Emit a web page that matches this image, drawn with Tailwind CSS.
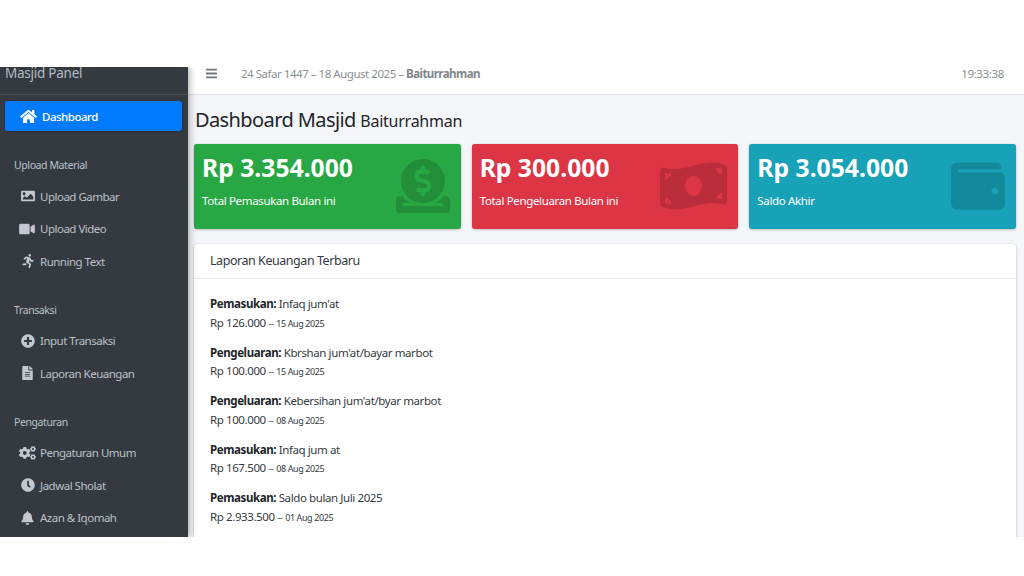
<!DOCTYPE html>
<html><head><meta charset="utf-8"><script src="https://cdn.jsdelivr.net/npm/@tailwindcss/browser@4"></script></head>
<body class="bg-white">
<div class="w-[1024px] h-[576px] flex flex-col overflow-hidden bg-white font-['Noto_Sans',sans-serif]">
  <div class="h-[67px] shrink-0"></div>
  <div class="h-[470px] flex overflow-hidden bg-[#f4f6f9]">
    <aside class="w-[188px] shrink-0 bg-[#343a40] text-[#bcc1c9] relative z-10 shadow-[2px_0_7px_rgba(0,0,0,0.3)] overflow-hidden text-[11.5px] tracking-[-0.5px]">
      <div class="h-[28px] border-b border-[#4b545c] pl-[5px] text-[13.5px] tracking-[-0.25px] leading-[13px] text-[#b5bac1]">Masjid Panel</div>
      <div class="pl-[5px] pr-[6px] pt-[6px]">
        <div class="h-[30px] rounded-[3px] bg-[#007bff] text-white flex items-center pl-[15px] pt-[2px] font-medium shadow-sm">
          <svg class="w-[17px] h-[15px] mr-[5px] mb-[2px] fill-white" viewBox="0 0 576 512"><path d="M280.37 148.26L96 300.11V464a16 16 0 0 0 16 16l112.06-.29a16 16 0 0 0 15.92-16V368a16 16 0 0 1 16-16h64a16 16 0 0 1 16 16v95.64a16 16 0 0 0 16 16.05L464 480a16 16 0 0 0 16-16V300L295.67 148.26a12.19 12.19 0 0 0-15.3 0zM571.6 251.47L488 182.56V44.05a12 12 0 0 0-12-12h-56a12 12 0 0 0-12 12v72.61L318.47 43a48 48 0 0 0-61 0L4.34 251.47a12 12 0 0 0-1.6 16.9l25.5 31A12 12 0 0 0 45.15 301l235.22-193.74a12.19 12.19 0 0 1 15.3 0L530.9 301a12 12 0 0 0 16.9-1.6l25.5-31a12 12 0 0 0-1.7-16.93z"/></svg>
          Dashboard
        </div>
        <div class="mt-[26px] pl-[9px] h-[16px] leading-[16px] text-[10.5px] tracking-[-0.4px]">Upload Material</div>
        <div class="mt-[7px] flex flex-col">
          <div class="h-[32.5px] flex items-center pl-[15px]"><span class="w-[15px] mr-[5px] flex justify-center"><svg class="h-[14px] w-[14px] fill-[#c2c7d0]" viewBox="0 0 512 512"><path d="M464 448H48c-26.51 0-48-21.49-48-48V112c0-26.51 21.49-48 48-48h416c26.51 0 48 21.49 48 48v288c0 26.51-21.49 48-48 48zM112 120c-30.928 0-56 25.072-56 56s25.072 56 56 56 56-25.072 56-56-25.072-56-56-56zM64 384h384V272l-87.515-87.515c-4.686-4.686-12.284-4.686-16.971 0L208 320l-55.515-55.515c-4.686-4.686-12.284-4.686-16.971 0L64 336v48z"/></svg></span>Upload Gambar</div>
          <div class="h-[32.5px] flex items-center pl-[14px]"><span class="w-[16px] mr-[5px] flex justify-center"><svg class="h-[14px] w-[16px] fill-[#c2c7d0]" viewBox="0 0 576 512"><path d="M336.2 64H47.8C21.4 64 0 85.4 0 111.8v288.4C0 426.6 21.4 448 47.8 448h288.4c26.4 0 47.8-21.4 47.8-47.8V111.8c0-26.4-21.4-47.8-47.8-47.8zm189.4 37.7L416 177.3v157.4l109.6 75.5c21.2 14.6 50.4-.3 50.4-25.8V127.5c0-25.4-29.1-40.4-50.4-25.8z"/></svg></span>Upload Video</div>
          <div class="h-[32.5px] flex items-center pl-[15px]"><span class="w-[15px] mr-[5px] flex justify-center"><svg class="h-[14px] w-[12px] fill-[#c2c7d0]" viewBox="0 0 416 512"><path d="M272 96c26.51 0 48-21.49 48-48S298.51 0 272 0s-48 21.49-48 48 21.49 48 48 48zM113.69 317.47l-14.8 34.52H32c-17.67 0-32 14.33-32 32s14.33 32 32 32h77.45c19.25 0 36.58-11.44 44.11-29.09l8.79-20.52-10.67-6.3c-17.32-10.23-30.06-25.37-37.99-42.61zM384 223.99h-44.03l-26.06-53.25c-12.5-25.55-35.45-44.23-61.78-50.94l-71.08-21.14c-28.3-6.8-57.77-.55-80.84 17.14l-39.67 30.41c-14.03 10.75-16.69 30.83-5.92 44.86s30.84 16.66 44.86 5.92l39.69-30.41c7.67-5.89 17.44-8 25.27-6.14l14.7 4.37-37.46 87.39c-12.62 29.48-1.31 64.01 26.3 80.31l84.98 50.17-27.47 87.73c-5.28 16.86 4.11 34.81 20.97 40.09 3.19 1 6.41 1.48 9.58 1.48 13.61 0 26.23-8.77 30.52-22.45l31.64-101.06c5.91-20.77-2.89-43.08-21.64-54.39l-61.24-36.14 31.31-78.28 20.27 41.43c8 16.34 24.92 26.89 43.11 26.89H384c17.67 0 32-14.33 32-32s-14.33-31.99-32-31.99z"/></svg></span>Running Text</div>
        </div>
        <div class="mt-[24px] pl-[9px] h-[16px] leading-[16px] text-[10.5px] tracking-[-0.4px]">Transaksi</div>
        <div class="mt-[7px] flex flex-col">
          <div class="h-[32.5px] flex items-center pl-[15px]"><span class="w-[15px] mr-[5px] flex justify-center"><svg class="h-[14px] w-[14px] fill-[#c2c7d0]" viewBox="0 0 512 512"><path d="M256 8C119 8 8 119 8 256s111 248 248 248 248-111 248-248S393 8 256 8zm144 276c0 6.6-5.4 12-12 12h-92v92c0 6.6-5.4 12-12 12h-56c-6.6 0-12-5.4-12-12v-92h-92c-6.6 0-12-5.4-12-12v-56c0-6.6 5.4-12 12-12h92v-92c0-6.6 5.4-12 12-12h56c6.6 0 12 5.4 12 12v92h92c6.6 0 12 5.4 12 12v56z"/></svg></span>Input Transaksi</div>
          <div class="h-[32.5px] flex items-center pl-[15px]"><span class="w-[15px] mr-[5px] flex justify-center"><svg class="h-[14px] w-[11px] fill-[#c2c7d0]" viewBox="0 0 384 512"><path d="M224 136V0H24C10.7 0 0 10.7 0 24v464c0 13.3 10.7 24 24 24h336c13.3 0 24-10.7 24-24V160H248c-13.2 0-24-10.8-24-24zm64 236c0 6.6-5.4 12-12 12H108c-6.6 0-12-5.4-12-12v-8c0-6.6 5.4-12 12-12h168c6.6 0 12 5.4 12 12v8zm0-64c0 6.6-5.4 12-12 12H108c-6.6 0-12-5.4-12-12v-8c0-6.6 5.4-12 12-12h168c6.6 0 12 5.4 12 12v8zm0-72v8c0 6.6-5.4 12-12 12H108c-6.6 0-12-5.4-12-12v-8c0-6.6 5.4-12 12-12h168c6.6 0 12 5.4 12 12zm96-114.1v6.1H256V0h6.1c6.4 0 12.5 2.5 17 7l97.9 98c4.5 4.5 7 10.6 7 16.9z"/></svg></span>Laporan Keuangan</div>
        </div>
        <div class="mt-[24px] pl-[9px] h-[16px] leading-[16px] text-[10.5px] tracking-[-0.4px]">Pengaturan</div>
        <div class="mt-[7px] flex flex-col">
          <div class="h-[32.5px] flex items-center pl-[14px]"><span class="w-[17px] mr-[4px] flex justify-center"><svg class="h-[14px] w-[17px] fill-[#c2c7d0]" viewBox="0 0 640 512"><path d="M512.1 191l-8.2 14.3c-3 5.3-9.4 7.5-15.1 5.4-11.8-4.4-22.6-10.7-32.1-18.6-4.6-3.8-5.8-10.5-2.8-15.7l8.2-14.3c-6.9-8-12.3-17.3-15.9-27.4h-16.5c-6 0-11.2-4.3-12.2-10.3-2-12-2.1-24.6 0-37.1 1-6 6.2-10.4 12.2-10.4h16.5c3.6-10.1 9-19.4 15.9-27.4l-8.2-14.3c-3-5.2-1.9-11.9 2.8-15.7 9.5-7.9 20.4-14.2 32.1-18.6 5.7-2.1 12.1.1 15.1 5.4l8.2 14.3c10.5-1.9 21.2-1.9 31.7 0L552 6.3c3-5.3 9.4-7.5 15.1-5.4 11.8 4.4 22.6 10.7 32.1 18.6 4.6 3.8 5.8 10.5 2.8 15.7l-8.2 14.3c6.9 8 12.3 17.3 15.9 27.4h16.5c6 0 11.2 4.3 12.2 10.3 2 12 2.1 24.6 0 37.1-1 6-6.2 10.4-12.2 10.4h-16.5c-3.6 10.1-9 19.4-15.9 27.4l8.2 14.3c3 5.2 1.9 11.9-2.8 15.7-9.5 7.9-20.4 14.2-32.1 18.6-5.7 2.1-12.1-.1-15.1-5.4l-8.2-14.3c-10.4 1.9-21.2 1.9-31.7 0zm-10.5-58.8c38.5 29.6 82.4-14.3 52.8-52.8-38.5-29.7-82.4 14.3-52.8 52.8zM386.3 286.1l33.7 16.8c10.1 5.8 14.5 18.1 10.5 29.1-8.9 24.2-26.4 46.4-42.6 65.8-7.4 8.9-20.2 11.1-30.3 5.3l-29.1-16.8c-16 13.7-34.6 24.6-54.9 31.7v33.6c0 11.6-8.3 21.6-19.7 23.6-24.6 4.2-50.4 4.4-75.9 0-11.5-2-20-11.9-20-23.6V418c-20.3-7.2-38.9-18-54.9-31.7L74 403c-10 5.8-22.9 3.6-30.3-5.3-16.2-19.4-33.3-41.6-42.2-65.7-4-10.9.4-23.2 10.5-29.1l33.3-16.8c-3.9-20.9-3.9-42.4 0-63.4L12 205.8c-10.1-5.8-14.6-18.1-10.5-29 8.9-24.2 26-46.4 42.2-65.8 7.4-8.9 20.2-11.1 30.3-5.3l29.1 16.8c16-13.7 34.6-24.6 54.9-31.7V57.1c0-11.5 8.2-21.5 19.6-23.5 24.6-4.2 50.5-4.4 76-.1 11.5 2 20 11.9 20 23.6v33.6c20.3 7.2 38.9 18 54.9 31.7l29.1-16.8c10-5.8 22.9-3.6 30.3 5.3 16.2 19.4 33.2 41.6 42.1 65.8 4 10.9.1 23.2-10 29.1l-33.7 16.8c3.9 21 3.9 42.5 0 63.5zm-117.6 21.1c59.2-77-28.7-164.9-105.7-105.7-59.2 77 28.7 164.9 105.7 105.7zm243.4 182.7l-8.2 14.3c-3 5.3-9.4 7.5-15.1 5.4-11.8-4.4-22.6-10.7-32.1-18.6-4.6-3.8-5.8-10.5-2.8-15.7l8.2-14.3c-6.9-8-12.3-17.3-15.9-27.4h-16.5c-6 0-11.2-4.3-12.2-10.3-2-12-2.1-24.6 0-37.1 1-6 6.2-10.4 12.2-10.4h16.5c3.6-10.1 9-19.4 15.9-27.4l-8.2-14.3c-3-5.2-1.9-11.9 2.8-15.7 9.5-7.9 20.4-14.2 32.1-18.6 5.7-2.1 12.1.1 15.1 5.4l8.2 14.3c10.5-1.9 21.2-1.9 31.7 0l8.2-14.3c3-5.3 9.4-7.5 15.1-5.4 11.8 4.4 22.6 10.7 32.1 18.6 4.6 3.8 5.8 10.5 2.8 15.7l-8.2 14.3c6.9 8 12.3 17.3 15.9 27.4h16.5c6 0 11.2 4.3 12.2 10.3 2 12 2.1 24.6 0 37.1-1 6-6.2 10.4-12.2 10.4h-16.5c-3.6 10.1-9 19.4-15.9 27.4l8.2 14.3c3 5.2 1.9 11.9-2.8 15.7-9.5 7.9-20.4 14.2-32.1 18.6-5.7 2.1-12.1-.1-15.1-5.4l-8.2-14.3c-10.4 1.9-21.2 1.9-31.7 0zM501.6 431c38.5 29.6 82.4-14.3 52.8-52.8-38.5-29.6-82.4 14.3-52.8 52.8z"/></svg></span>Pengaturan Umum</div>
          <div class="h-[32.5px] flex items-center pl-[15px]"><span class="w-[15px] mr-[5px] flex justify-center"><svg class="h-[14px] w-[14px] fill-[#c2c7d0]" viewBox="0 0 512 512"><path d="M256,8C119,8,8,119,8,256S119,504,256,504,504,393,504,256,393,8,256,8Zm92.49,313h0l-20,25a16,16,0,0,1-22.49,2.5h0l-67-49.72a40,40,0,0,1-15-31.23V112a16,16,0,0,1,16-16h32a16,16,0,0,1,16,16V256l58,42.5A16,16,0,0,1,348.49,321Z"/></svg></span>Jadwal Sholat</div>
          <div class="h-[32.5px] flex items-center pl-[15px]"><span class="w-[15px] mr-[5px] flex justify-center"><svg class="h-[14px] w-[13px] fill-[#c2c7d0]" viewBox="0 0 448 512"><path d="M224 512c35.32 0 63.97-28.65 63.97-64H160.03c0 35.35 28.65 64 63.97 64zm215.39-149.71c-19.32-20.76-55.47-51.99-55.47-154.29 0-77.7-54.48-139.9-127.94-155.16V32c0-17.67-14.32-32-31.98-32s-31.98 14.33-31.98 32v20.84C118.56 68.1 64.08 130.3 64.08 208c0 102.3-36.15 133.53-55.47 154.29-6 6.45-8.66 14.16-8.61 21.71.11 16.4 12.98 32 32.1 32h383.8c19.12 0 32-15.6 32.1-32 .05-7.55-2.61-15.26-8.61-21.71z"/></svg></span>Azan &amp; Iqomah</div>
        </div>
      </div>
    </aside>
    <main class="flex-1 min-w-0 flex flex-col tracking-[-0.35px]">
      <header class="h-[28px] shrink-0 bg-white border-b border-[#dee2e6] flex items-center pl-[18px] pr-[20px] pb-[14px] text-[#8b9095] text-[11.5px]">
        <svg class="w-[11px] h-[13px] mr-[24px] fill-[#6c757d]" viewBox="0 0 448 512"><path d="M16 132h416c8.837 0 16-7.163 16-16V76c0-8.837-7.163-16-16-16H16C7.163 60 0 67.163 0 76v40c0 8.837 7.163 16 16 16zm0 160h416c8.837 0 16-7.163 16-16v-40c0-8.837-7.163-16-16-16H16c-8.837 0-16 7.163-16 16v40c0 8.837 7.163 16 16 16zm0 160h416c8.837 0 16-7.163 16-16v-40c0-8.837-7.163-16-16-16H16c-8.837 0-16 7.163-16 16v40c0 8.837 7.163 16 16 16z"/></svg>
        <span class="tracking-[-0.47px]">24 Safar 1447 – 18 August 2025 – <b class="font-bold text-[#7f858a] tracking-[-0.55px]">Baiturrahman</b></span>
        <span class="ml-auto">19:33:38</span>
      </header>
      <div class="flex-1 overflow-hidden pl-[6px] pr-[8px]">
        <h1 class="mt-[10px] h-[29px] text-[#212529] text-[20px] tracking-[-0.6px] leading-[29px] font-normal pl-[1px]">Dashboard Masjid <span class="text-[16px] tracking-[-0.25px]">Baiturrahman</span></h1>
        <div class="mt-[10px] grid grid-cols-3 gap-[11px]">
          <div class="h-[85px] rounded-[3px] bg-[#28a745] text-white relative px-[8px] pt-[7px] shadow-[0_0_1px_rgba(0,0,0,0.2),0_1px_3px_rgba(0,0,0,0.2)]">
            <div class="text-[24.7px] leading-[33px] font-bold tracking-normal">Rp 3.354.000</div>
            <div class="mt-[8px] text-[11.5px] leading-[18px]">Total Pemasukan Bulan ini</div>
            <svg class="absolute right-[11px] top-[15px] w-[54px] h-[54px] fill-black/15" viewBox="0 0 512 512"><path d="M256 416c114.9 0 208-93.1 208-208S370.9 0 256 0 48 93.1 48 208s93.1 208 208 208zM233.8 97.4V80.6c0-9.2 7.4-16.6 16.6-16.6h11.1c9.2 0 16.6 7.4 16.6 16.6v17c15.5.8 30.5 6.1 43 15.4 5.6 4.1 6.2 12.3 1.2 17.1L306 146.2c-3.8 3.7-9.5 3.8-14 1-5.4-3.4-11.4-5.1-17.8-5.1h-38.9c-9 0-16.3 8.2-16.3 18.3 0 8.2 5 15.5 12.1 17.6l62.3 18.7c25.7 7.7 43.7 32.4 43.7 60.1 0 34-26.4 61.5-59.1 62.4v16.8c0 9.2-7.4 16.6-16.6 16.6h-11.1c-9.2 0-16.6-7.4-16.6-16.6v-17c-15.5-.8-30.5-6.1-43-15.4-5.6-4.1-6.2-12.3-1.2-17.1l16.3-15.5c3.8-3.7 9.5-3.8 14-1 5.4 3.4 11.4 5.1 17.8 5.1h38.9c9 0 16.3-8.2 16.3-18.3 0-8.2-5-15.5-12.1-17.6l-62.3-18.7c-25.7-7.7-43.7-32.4-43.7-60.1.1-34 26.4-61.5 59.1-62.4zM480 352h-32.5c-19.6 26-44.6 47.7-73 64h63.8c5.3 0 9.6 3.6 9.6 8v16c0 4.4-4.3 8-9.6 8H73.6c-5.3 0-9.6-3.6-9.6-8v-16c0-4.4 4.3-8 9.6-8h63.8c-28.4-16.3-53.3-38-73-64H32c-17.7 0-32 14.3-32 32v96c0 17.7 14.3 32 32 32h448c17.7 0 32-14.3 32-32v-96c0-17.7-14.3-32-32-32z"/></svg>
          </div>
          <div class="h-[85px] rounded-[3px] bg-[#dc3545] text-white relative px-[8px] pt-[7px] shadow-[0_0_1px_rgba(0,0,0,0.2),0_1px_3px_rgba(0,0,0,0.2)]">
            <div class="text-[24.7px] leading-[33px] font-bold tracking-normal">Rp 300.000</div>
            <div class="mt-[8px] text-[11.5px] leading-[18px]">Total Pengeluaran Bulan ini</div>
            <svg class="absolute right-[11px] top-[15px] w-[67px] h-[54px] fill-black/15" viewBox="0 0 640 512"><path d="M621.16 54.46C582.37 38.19 543.55 32 504.75 32c-123.17-.01-246.33 62.34-369.5 62.34-30.89 0-61.76-3.92-92.65-13.72-3.47-1.1-6.95-1.62-10.35-1.62C15.04 79 0 92.32 0 110.81v317.26c0 12.63 7.23 24.6 18.84 29.46C57.63 473.81 96.45 480 135.25 480c123.17 0 246.34-62.35 369.51-62.35 30.89 0 61.76 3.92 92.65 13.72 3.47 1.1 6.95 1.62 10.35 1.62 17.21 0 32.25-13.32 32.25-31.81V83.93c-.01-12.64-7.24-24.6-18.85-29.47zM48 132.22c20.12 5.04 41.12 7.57 62.72 8.93C104.84 170.54 79 192.69 48 192.69v-60.47zm0 285v-47.78c34.37 0 62.18 27.27 63.71 61.4-22.53-1.81-43.59-6.31-63.71-13.62zM320 352c-44.19 0-80-42.99-80-96 0-53.02 35.82-96 80-96s80 42.98 80 96c0 53.03-35.83 96-80 96zm272 27.78c-17.52-4.39-35.71-6.85-54.32-8.44 5.87-26.08 27.5-45.88 54.32-49.28v57.72zm0-236.11c-30.89-3.91-54.86-29.7-55.81-61.55 19.54 2.17 38.09 6.23 55.81 12.66v48.89z"/></svg>
          </div>
          <div class="h-[85px] rounded-[3px] bg-[#17a2b8] text-white relative px-[8px] pt-[7px] shadow-[0_0_1px_rgba(0,0,0,0.2),0_1px_3px_rgba(0,0,0,0.2)]">
            <div class="text-[24.7px] leading-[33px] font-bold tracking-normal">Rp 3.054.000</div>
            <div class="mt-[8px] text-[11.5px] leading-[18px]">Saldo Akhir</div>
            <svg class="absolute right-[11px] top-[15px] w-[54px] h-[54px] fill-black/15" viewBox="0 0 512 512"><path d="M461.2 128H80c-8.84 0-16-7.16-16-16s7.16-16 16-16h384c8.84 0 16-7.16 16-16 0-26.51-21.49-48-48-48H64C28.65 32 0 60.65 0 96v320c0 35.35 28.65 64 64 64h397.2c28.02 0 50.8-21.53 50.8-48V176c0-26.47-22.78-48-50.8-48zM416 336c-17.67 0-32-14.33-32-32s14.33-32 32-32 32 14.33 32 32-14.33 32-32 32z"/></svg>
          </div>
        </div>
        <section class="mt-[15px] bg-white rounded-t-[3px] shadow-[0_0_1px_rgba(0,0,0,0.2),0_1px_3px_rgba(0,0,0,0.2)] h-[300px]">
          <div class="h-[35px] border-b border-[#e3e6e9] pl-[16px] pt-[1px] flex items-center text-[12.5px] tracking-[-0.45px] text-[#343a40]">Laporan Keuangan Terbaru</div>
          <div class="pl-[16px] pt-[16px] text-[11.5px] tracking-[-0.4px] leading-[18.5px] text-[#343a40] flex flex-col gap-[10.6px]">
            <div><div><b class="font-bold text-[#212529]">Pemasukan:</b> Infaq jum'at</div><div>Rp 126.000 <span class="text-[#6c757d]">–</span> <span class="text-[9px]">15 Aug 2025</span></div></div>
            <div><div><b class="font-bold text-[#212529]">Pengeluaran:</b> Kbrshan jum'at/bayar marbot</div><div>Rp 100.000 <span class="text-[#6c757d]">–</span> <span class="text-[9px]">15 Aug 2025</span></div></div>
            <div><div><b class="font-bold text-[#212529]">Pengeluaran:</b> Kebersihan jum'at/byar marbot</div><div>Rp 100.000 <span class="text-[#6c757d]">–</span> <span class="text-[9px]">08 Aug 2025</span></div></div>
            <div><div><b class="font-bold text-[#212529]">Pemasukan:</b> Infaq jum at</div><div>Rp 167.500 <span class="text-[#6c757d]">–</span> <span class="text-[9px]">08 Aug 2025</span></div></div>
            <div><div><b class="font-bold text-[#212529]">Pemasukan:</b> Saldo bulan Juli 2025</div><div>Rp 2.933.500 <span class="text-[#6c757d]">–</span> <span class="text-[9px]">01 Aug 2025</span></div></div>
          </div>
        </section>
      </div>
    </main>
  </div>
  <div class="flex-1"></div>
</div>
</body></html>
